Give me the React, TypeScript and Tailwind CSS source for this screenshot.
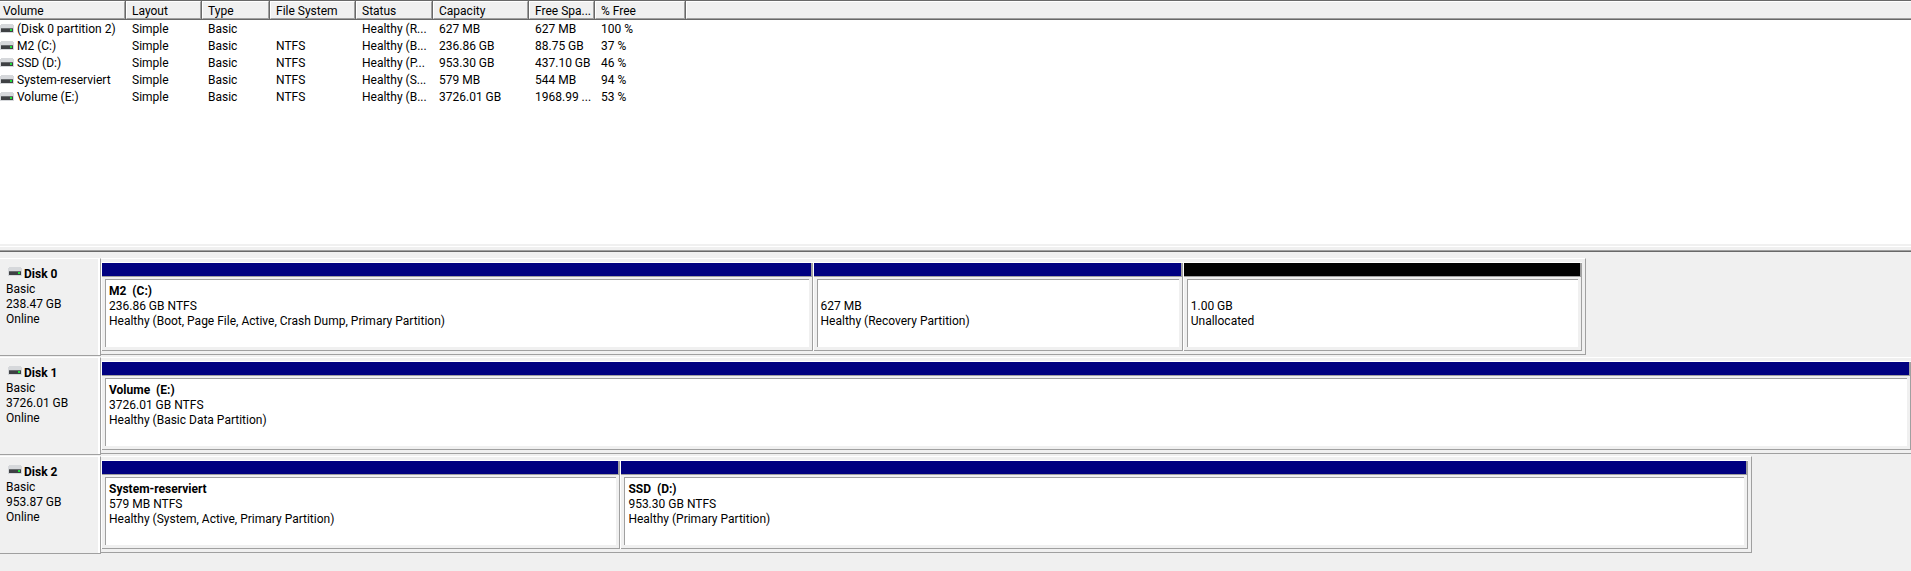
const drive = (
  <svg aria-hidden="true" width="14" height="9" viewBox="0 0 14 9" shapeRendering="crispEdges" className="shrink-0">
    <path d="M1 0h12v1h1v8H0V1h1z" fill="#d6d8db" />
    <path d="M1 4h12v4H1z" fill="#3f4144" />
    <path d="M1 4h12v1H1z" fill="#686b6e" />
    <path d="M10 5h2v2h-2z" fill="#1fe03a" />
  </svg>
)

const columns = [
  { title: 'Volume', width: 'w-[126px]' },
  { title: 'Layout', width: 'w-[76px]' },
  { title: 'Type', width: 'w-[68px]' },
  { title: 'File System', width: 'w-[86px]' },
  { title: 'Status', width: 'w-[77px]' },
  { title: 'Capacity', width: 'w-[96px]' },
  { title: 'Free Spa...', width: 'w-[66px]' },
  { title: '% Free', width: 'w-[91px]' },
]

const volumes = [
  ['(Disk 0 partition 2)', 'Simple', 'Basic', '', 'Healthy (R...', '627 MB', '627 MB', '100 %'],
  ['M2 (C:)', 'Simple', 'Basic', 'NTFS', 'Healthy (B...', '236.86 GB', '88.75 GB', '37 %'],
  ['SSD (D:)', 'Simple', 'Basic', 'NTFS', 'Healthy (P...', '953.30 GB', '437.10 GB', '46 %'],
  ['System-reserviert', 'Simple', 'Basic', 'NTFS', 'Healthy (S...', '579 MB', '544 MB', '94 %'],
  ['Volume (E:)', 'Simple', 'Basic', 'NTFS', 'Healthy (B...', '3726.01 GB', '1968.99 ...', '53 %'],
]

interface Partition {
  name?: string
  size: string
  status: string
  share: number
  unallocated?: boolean
}

interface DiskProps {
  name: string
  size: string
  width: string
  partitions: Partition[]
}

const disks: DiskProps[] = [
  {
    name: 'Disk 0',
    size: '238.47 GB',
    width: 'w-[82.04%]',
    partitions: [
      { name: 'M2  (C:)', size: '236.86 GB NTFS', status: 'Healthy (Boot, Page File, Active, Crash Dump, Primary Partition)', share: 712 },
      { size: '627 MB', status: 'Healthy (Recovery Partition)', share: 370 },
      { size: '1.00 GB', status: 'Unallocated', share: 399, unallocated: true },
    ],
  },
  {
    name: 'Disk 1',
    size: '3726.01 GB',
    width: 'w-[calc(100%+4px)]',
    partitions: [
      { name: 'Volume  (E:)', size: '3726.01 GB NTFS', status: 'Healthy (Basic Data Partition)', share: 1 },
    ],
  },
  {
    name: 'Disk 2',
    size: '953.87 GB',
    width: 'w-[91.22%]',
    partitions: [
      { name: 'System-reserviert', size: '579 MB NTFS', status: 'Healthy (System, Active, Primary Partition)', share: 519 },
      { name: 'SSD  (D:)', size: '953.30 GB NTFS', status: 'Healthy (Primary Partition)', share: 1128 },
    ],
  },
]

const VolumeTable = () => (
  <table className="w-full table-fixed border-separate border-spacing-0 text-left leading-4">
    <thead>
      <tr className="h-5 bg-[#f0f0f0]">
        {columns.map((column, idx) => (
          <th key={column.title} className={`${column.width} border-y border-r border-[#696969] p-0 font-normal`}>
            <div className={`h-[18px] border-b border-r border-t border-b-[#a0a0a0] border-r-[#a0a0a0] border-t-white pt-px ${idx === 0 ? 'pl-[3px]' : 'border-l border-l-white pl-[5px]'}`}>
              {column.title}
            </div>
          </th>
        ))}
        <td className="border-y border-[#696969] p-0">
          <div className="h-[18px] border-b border-l border-t border-white border-b-[#a0a0a0]"></div>
        </td>
      </tr>
    </thead>
    <tbody>
      {volumes.map((volume) => (
        <tr key={volume[0]} className="h-[17px]">
          {volume.map((value, idx) => (
            <td key={idx} className={`whitespace-nowrap p-0 ${idx === 0 ? '' : 'pl-1.5'}`}>
              {idx === 0 ? <div className="flex items-center gap-[3px]">{drive}{value}</div> : value}
            </td>
          ))}
        </tr>
      ))}
    </tbody>
  </table>
)

const PartitionBox = ({ name, size, status, share, unallocated }: Partition) => (
  <div className="flex min-w-0 basis-0 flex-col border-l border-t border-white" style={{ flexGrow: share }}>
    <div className={`h-[14px] border-b border-r-2 border-[#a0a0a0] ${unallocated ? 'bg-black' : 'bg-[#000080]'}`}></div>
    <div className="flex-1 border-b border-r border-[#a0a0a0] pb-[3px] pl-[3px] pr-[3px] pt-[2px]">
      <div className="h-full overflow-hidden whitespace-pre border-l border-t border-[#a0a0a0] bg-white pl-[3px] pt-1">
        <p className="h-[15px] font-bold">{name}</p>
        <p>{size}</p>
        <p>{status}</p>
      </div>
    </div>
  </div>
)

const Disk = ({ name, size, width, partitions }: DiskProps) => (
  <section className="flex h-[99px]">
    <div className="h-[98px] w-[101px] shrink-0 border-b border-r border-t border-b-[#a0a0a0] border-r-[#a0a0a0] border-t-white">
      <div className="h-full border-r-2 border-white pl-1.5 pt-2">
        <h2 className="flex gap-0.5 pl-0.5 font-bold">{drive}{name}</h2>
        <p>Basic</p>
        <p>{size}</p>
        <p>Online</p>
      </div>
    </div>
    <div className="min-w-0 flex-1 overflow-hidden">
      <div className={`${width} flex h-[97px] border-b border-r border-t border-b-[#a0a0a0] border-r-[#a0a0a0] border-t-white pb-[3px] pr-[3px] pt-[3px]`}>
        {partitions.map((partition) => (
          <PartitionBox key={partition.status} {...partition} />
        ))}
      </div>
    </div>
  </section>
)

const App = () => (
  <main className="min-h-screen bg-[#f0f0f0] font-['Roboto',sans-serif] text-[12px] leading-[15px] text-black">
    <div className="h-[244px] bg-white">
      <VolumeTable />
    </div>
    <div className="h-2 border-b border-[#696969] pt-0.5">
      <div className="h-[5px] border-b border-t border-b-[#a0a0a0] border-t-white"></div>
    </div>
    <div className="pt-1.5">
      {disks.map((disk) => (
        <Disk key={disk.name} {...disk} />
      ))}
    </div>
  </main>
)

export default App
